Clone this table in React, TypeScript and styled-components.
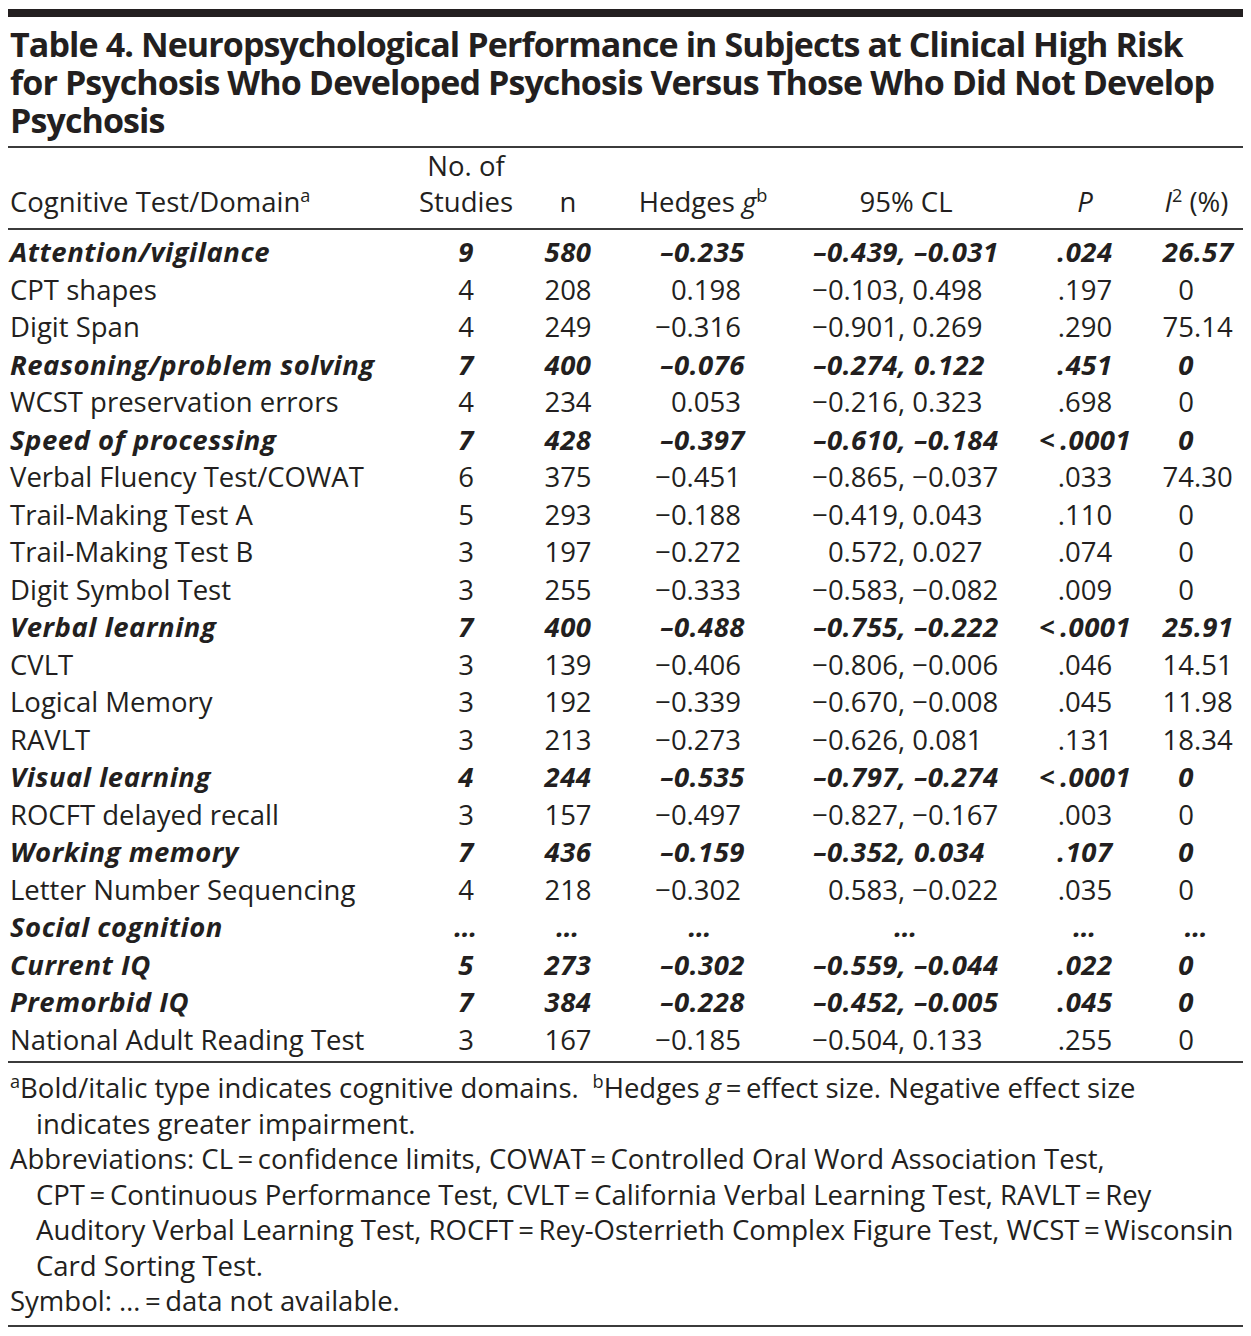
import React from "react";
import styled, { createGlobalStyle } from "styled-components";

const GlobalStyle = createGlobalStyle`
  body {
    margin: 8px;
    background: #ffffff;
    color: #231f20;
    font-family: "Open Sans", "Liberation Sans", sans-serif;
  }
`;

const COLS = "402px 112px 92px 178px 228px 130px 93px";
const INK = "#231f20";
const RULE = "#3b3b3b";

const Wrapper = styled.div`
  width: 1235px;
  padding-top: 1px;
`;

const TopBar = styled.div`
  height: 8px;
  background: ${INK};
`;

const Title = styled.h1`
  margin: 0;
  padding: 8px 0 7px 2px;
  font-size: 34px;
  line-height: 38px;
  font-weight: 700;
  letter-spacing: -0.9px;
  border-bottom: 2px solid ${RULE};
`;

const HeaderRow = styled.div`
  display: grid;
  grid-template-columns: ${COLS};
  align-items: end;
  padding-bottom: 8px;
  font-size: 27.5px;
  line-height: 36px;
  border-bottom: 2px solid ${RULE};
`;

const Body = styled.div`
  padding: 3px 0;
  border-bottom: 2px solid ${RULE};
`;

const Row = styled.div<{ $domain?: boolean }>`
  display: grid;
  grid-template-columns: ${COLS};
  height: 37.5px;
  font-size: 27.5px;
  line-height: 37.5px;
  font-weight: ${(p) => (p.$domain ? 700 : 400)};
  font-style: ${(p) => (p.$domain ? "italic" : "normal")};
  letter-spacing: ${(p) => (p.$domain ? "0.5px" : "0")};
  white-space: nowrap;
`;

const NameCell = styled.div`
  padding-left: 2px;
`;

const CenterCell = styled.div`
  text-align: center;
`;

const RightCell = styled.div<{ $pr: number }>`
  text-align: right;
  padding-right: ${(p) => p.$pr}px;
`;

const SplitCell = styled.div<{ $left: number }>`
  display: grid;
  grid-template-columns: ${(p) => p.$left}px 1fr;
`;

const SplitLeft = styled.span`
  text-align: right;
`;

const SplitRight = styled.span`
  text-align: left;
  white-space: pre;
`;

const Sup = styled.sup`
  font-size: 0.66em;
  line-height: 0;
  vertical-align: 0.55em;
`;

const Ital = styled.i`
  font-style: italic;
`;

const Notes = styled.div`
  padding: 7px 0 6px 2px;
  font-size: 27.5px;
  line-height: 35.5px;
  border-bottom: 2px solid ${RULE};
`;

const NoteLine = styled.div<{ $indent?: boolean }>`
  padding-left: ${(p) => (p.$indent ? 26 : 0)}px;
  white-space: nowrap;
`;

type Entry = [string, boolean, string, string, string, string, string, string, string];

const ELL = "\u2026";

const rows: Entry[] = [
  ["Attention/vigilance", true, "9", "580", "-0.235", "-0.439", "-0.031", ".024", "26.57"],
  ["CPT shapes", false, "4", "208", "0.198", "-0.103", "0.498", ".197", "0"],
  ["Digit Span", false, "4", "249", "-0.316", "-0.901", "0.269", ".290", "75.14"],
  ["Reasoning/problem solving", true, "7", "400", "-0.076", "-0.274", "0.122", ".451", "0"],
  ["WCST preservation errors", false, "4", "234", "0.053", "-0.216", "0.323", ".698", "0"],
  ["Speed of processing", true, "7", "428", "-0.397", "-0.610", "-0.184", "<\u2009.0001", "0"],
  ["Verbal Fluency Test/COWAT", false, "6", "375", "-0.451", "-0.865", "-0.037", ".033", "74.30"],
  ["Trail-Making Test A", false, "5", "293", "-0.188", "-0.419", "0.043", ".110", "0"],
  ["Trail-Making Test B", false, "3", "197", "-0.272", "0.572", "0.027", ".074", "0"],
  ["Digit Symbol Test", false, "3", "255", "-0.333", "-0.583", "-0.082", ".009", "0"],
  ["Verbal learning", true, "7", "400", "-0.488", "-0.755", "-0.222", "<\u2009.0001", "25.91"],
  ["CVLT", false, "3", "139", "-0.406", "-0.806", "-0.006", ".046", "14.51"],
  ["Logical Memory", false, "3", "192", "-0.339", "-0.670", "-0.008", ".045", "11.98"],
  ["RAVLT", false, "3", "213", "-0.273", "-0.626", "0.081", ".131", "18.34"],
  ["Visual learning", true, "4", "244", "-0.535", "-0.797", "-0.274", "<\u2009.0001", "0"],
  ["ROCFT delayed recall", false, "3", "157", "-0.497", "-0.827", "-0.167", ".003", "0"],
  ["Working memory", true, "7", "436", "-0.159", "-0.352", "0.034", ".107", "0"],
  ["Letter Number Sequencing", false, "4", "218", "-0.302", "0.583", "-0.022", ".035", "0"],
  ["Social cognition", true, ELL, ELL, ELL, ELL, ELL, ELL, ELL],
  ["Current IQ", true, "5", "273", "-0.302", "-0.559", "-0.044", ".022", "0"],
  ["Premorbid IQ", true, "7", "384", "-0.228", "-0.452", "-0.005", ".045", "0"],
  ["National Adult Reading Test", false, "3", "167", "-0.185", "-0.504", "0.133", ".255", "0"],
];

// bold rows use an en dash, plain rows a true minus sign
const neg = (v: string, domain: boolean) => v.replace("-", domain ? "\u2013" : "\u2212");

function DataRow({ entry }: { entry: Entry }) {
  const [name, domain, studies, n, g, lo, hi, p, i2] = entry;
  if (studies === ELL) {
    return (
      <Row $domain={domain}>
        <NameCell>{name}</NameCell>
        <CenterCell>{ELL}</CenterCell>
        <CenterCell>{ELL}</CenterCell>
        <RightCell $pr={80}>{ELL}</RightCell>
        <CenterCell>{ELL}</CenterCell>
        <CenterCell>{ELL}</CenterCell>
        <CenterCell>{ELL}</CenterCell>
      </Row>
    );
  }
  const [whole, frac] = i2.split(".");
  return (
    <Row $domain={domain}>
      <NameCell>{name}</NameCell>
      <CenterCell>{studies}</CenterCell>
      <CenterCell>{n}</CenterCell>
      <RightCell $pr={domain ? 47 : 51}>{neg(g, domain)}</RightCell>
      <SplitCell $left={106}>
        <SplitLeft>{neg(lo, domain)}</SplitLeft>
        <SplitRight>{", " + neg(hi, domain)}</SplitRight>
      </SplitCell>
      <CenterCell>{p}</CenterCell>
      <SplitCell $left={44}>
        <SplitLeft>{whole}</SplitLeft>
        <SplitRight>{frac ? "." + frac : ""}</SplitRight>
      </SplitCell>
    </Row>
  );
}

const EQ = "\u2009=\u2009";

export default function App() {
  return (
    <Wrapper>
      <GlobalStyle />
      <TopBar />
      <Title>
        Table 4. Neuropsychological Performance in Subjects at Clinical High Risk
        <br />
        for Psychosis Who Developed Psychosis Versus Those Who Did Not Develop
        <br />
        Psychosis
      </Title>
      <HeaderRow>
        <NameCell>
          Cognitive Test/Domain<Sup>a</Sup>
        </NameCell>
        <CenterCell>
          No. of
          <br />
          Studies
        </CenterCell>
        <CenterCell>n</CenterCell>
        <CenterCell>
          Hedges <Ital>g</Ital>
          <Sup>b</Sup>
        </CenterCell>
        <CenterCell>95% CL</CenterCell>
        <CenterCell>
          <Ital>P</Ital>
        </CenterCell>
        <CenterCell>
          <Ital>I</Ital>
          <Sup>2</Sup> (%)
        </CenterCell>
      </HeaderRow>
      <Body>
        {rows.map((r) => (
          <DataRow key={r[0]} entry={r} />
        ))}
      </Body>
      <Notes>
        <NoteLine>
          <Sup>a</Sup>Bold/italic type indicates cognitive domains.{"\u2002"}
          <Sup>b</Sup>Hedges <Ital>g</Ital>
          {EQ}effect size. Negative effect size
        </NoteLine>
        <NoteLine $indent>indicates greater impairment.</NoteLine>
        <NoteLine>
          Abbreviations: CL{EQ}confidence limits, COWAT{EQ}Controlled Oral Word Association Test,
        </NoteLine>
        <NoteLine $indent>
          CPT{EQ}Continuous Performance Test, CVLT{EQ}California Verbal Learning Test, RAVLT{EQ}Rey
        </NoteLine>
        <NoteLine $indent>
          Auditory Verbal Learning Test, ROCFT{EQ}Rey-Osterrieth Complex Figure Test, WCST{EQ}Wisconsin
        </NoteLine>
        <NoteLine $indent>Card Sorting Test.</NoteLine>
        <NoteLine>Symbol: {ELL}{EQ}data not available.</NoteLine>
      </Notes>
    </Wrapper>
  );
}
